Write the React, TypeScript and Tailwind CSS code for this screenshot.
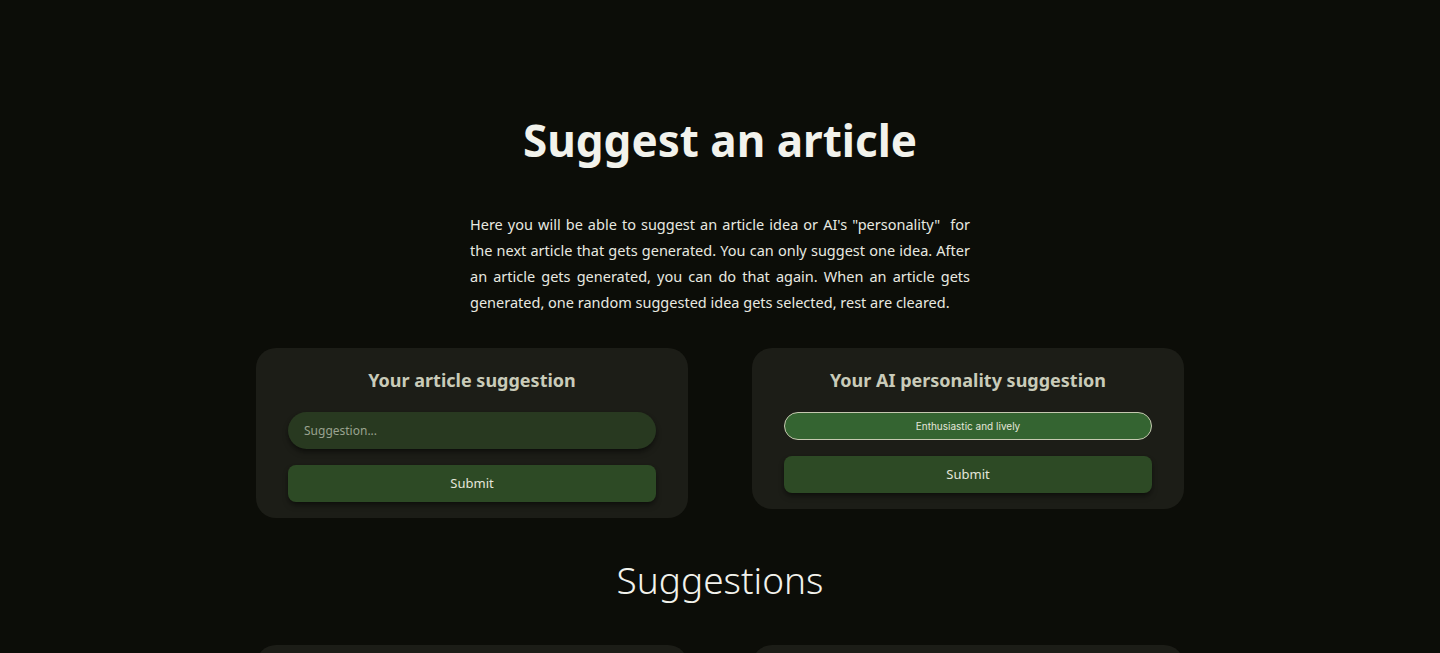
import { useState } from "react";

const font = { fontFamily: '"Noto Sans", "Open Sans", sans-serif' };

const intro = [
  `Here you will be able to suggest an article idea or AI's "personality"\u00a0 for`,
  "the next article that gets generated. You can only suggest one idea. After",
  "an article gets generated, you can do that again. When an article gets",
  "generated, one random suggested idea gets selected, rest are cleared.",
];

function Card({ title, children }: { title: string; children: React.ReactNode }) {
  return (
    <div className="w-[432px] rounded-[20px] bg-[#1c1d17] px-8 pt-[19px] pb-4">
      <h2 className="text-center text-[18px] font-bold leading-[26px] text-[#c9cbb9]">{title}</h2>
      <div className="mt-[19px] flex flex-col gap-4">{children}</div>
    </div>
  );
}

function SubmitButton() {
  return (
    <button className="h-[37px] w-full rounded-lg bg-[#2d4a25] text-[13px] text-[#e4e6da] shadow-md shadow-black/40">
      Submit
    </button>
  );
}

export default function App() {
  const [idea, setIdea] = useState("");
  const [personality, setPersonality] = useState("Enthusiastic and lively");

  return (
    <div className="min-h-screen bg-[#0c0d08] text-[#f0f0ea]" style={font}>
      <div className="flex flex-col items-center pt-[114px]">
        <h1 className="text-[44px] font-bold leading-[52px] text-[#f2f2ec]">Suggest an article</h1>

        <div className="mt-[45px] w-[500px] text-[14.5px] leading-[26px] text-[#e8e9e0]">
          {intro.map((line, i) => (
            <p
              key={i}
              className={i < intro.length - 1 ? "whitespace-nowrap text-justify [text-align-last:justify]" : "whitespace-nowrap"}
            >
              {line}
            </p>
          ))}
        </div>

        <div className="mt-[33px] flex items-start gap-16">
          <Card title="Your article suggestion">
            <input
              value={idea}
              onChange={(e) => setIdea(e.target.value)}
              placeholder="Suggestion..."
              className="h-[37px] w-full rounded-full bg-[#283920] px-4 text-[12px] text-[#e4e6da] shadow-md shadow-black/40 outline-none placeholder:text-[#9aa38f]"
            />
            <SubmitButton />
          </Card>

          <Card title="Your AI personality suggestion">
            <select
              value={personality}
              onChange={(e) => setPersonality(e.target.value)}
              className="h-[28px] w-full appearance-none rounded-full border border-[#c5c9b0] bg-[#346431] text-center text-[10px] text-[#e4e6da] outline-none"
              style={{ fontFamily: "Inter, sans-serif", textAlignLast: "center" }}
            >
              <option>Enthusiastic and lively</option>
              <option>Calm and thoughtful</option>
              <option>Sarcastic and witty</option>
            </select>
            <SubmitButton />
          </Card>
        </div>

        <h2 className="mt-[40px] text-[37px] font-light leading-[44px] text-[#f2f2ec]">Suggestions</h2>

        <div className="mt-[43px] flex gap-16">
          <div className="h-[60px] w-[432px] rounded-[20px] bg-[#1c1d17]" />
          <div className="h-[60px] w-[432px] rounded-[20px] bg-[#1c1d17]" />
        </div>
      </div>
    </div>
  );
}
